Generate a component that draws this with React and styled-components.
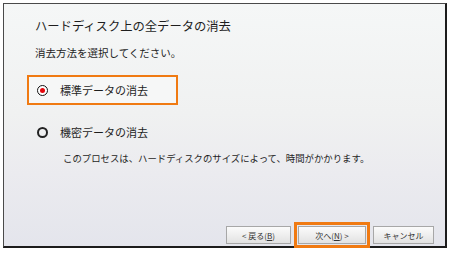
import React from "react";
import styled, { createGlobalStyle } from "styled-components";

const Global = createGlobalStyle`
	html, body {
		margin: 0;
		padding: 0;
		background: #ffffff;
	}
	body {
		font-family: "Noto Sans CJK JP", "Noto Sans", sans-serif;
		color: #1e1e1e;
	}
`;

const Page = styled.div`
	width: 450px;
	height: 255px;
	padding: 3px 0 0 3px;
	box-sizing: border-box;
`;

const Frame = styled.div`
	width: 444px;
	height: 245px;
	box-sizing: border-box;
	border-top: 1px solid #4a4a4a;
	border-left: 1px solid #4a4a4a;
	border-right: 2px solid #1c1c1c;
	border-bottom: 2px solid #1c1c1c;
	background: linear-gradient(#f5f7f7 0%, #f0f1f1 45%, #ebebef 70%, #e4e5ec 100%);
	padding: 14px 11px 2px 23px;
	display: flex;
	flex-direction: column;
`;

const Title = styled.h1`
	margin: 0 0 0 8px;
	font-size: 12.3px;
	line-height: 16px;
	font-weight: 400;
`;

const Subtitle = styled.p`
	margin: 11.5px 0 0 8px;
	font-size: 10.5px;
	line-height: 14px;
`;

const Options = styled.div`
	margin-top: 15.5px;
	display: flex;
	flex-direction: column;
	gap: 12px;
`;

const Option = styled.label`
	width: 151px;
	height: 30px;
	box-sizing: border-box;
	border: 2px solid ${(p) => (p.highlight ? "#f07a12" : "transparent")};
	background: ${(p) => (p.highlight ? "#f6f7f7" : "transparent")};
	padding-left: 8px;
	display: flex;
	align-items: center;
	gap: 12px;
	font-size: 11px;
`;

const Radio = styled.span`
	width: 11px;
	height: 11px;
	box-sizing: border-box;
	border-radius: 50%;
	border: ${(p) => (p.checked ? "1.5px solid #111" : "2px solid #222")};
	background: ${(p) => (p.checked ? "#ffffff" : "transparent")};
	display: flex;
	align-items: center;
	justify-content: center;
	flex-shrink: 0;

	&::after {
		content: "";
		width: 5px;
		height: 5px;
		border-radius: 50%;
		background: ${(p) => (p.checked ? "#e5070c" : "transparent")};
	}
`;

const Description = styled.p`
	margin: 4.5px 0 0 36px;
	font-size: 9.4px;
	line-height: 13px;
	white-space: nowrap;
`;

const Spacer = styled.div`
	flex: 1;
`;

const ButtonRow = styled.div`
	display: flex;
	justify-content: flex-end;
	gap: 7px;
`;

const Button = styled.button`
	width: ${(p) => p.w}px;
	height: 18px;
	padding: 0;
	box-sizing: border-box;
	border: 1px solid #a7a7a7;
	border-radius: 0;
	background: linear-gradient(#fbfbfb, #ececec 60%, #e2e2e2);
	font-family: "Noto Sans CJK JP", "Noto Sans", sans-serif;
	font-size: 8px;
	color: #333;
	outline: ${(p) => (p.highlight ? "3px solid #f07a12" : "none")};
	outline-offset: 1px;

	u {
		text-decoration: underline;
	}
`;

export default function App() {
	return (
		<Page>
			<Global />
			<Frame>
				<Title>ハードディスク上の全データの消去</Title>
				<Subtitle>消去方法を選択してください。</Subtitle>
				<Options>
					<Option highlight>
						<Radio checked />
						標準データの消去
					</Option>
					<Option>
						<Radio />
						機密データの消去
					</Option>
				</Options>
				<Description>このプロセスは、ハードディスクのサイズによって、時間がかかります。</Description>
				<Spacer />
				<ButtonRow>
					<Button w={65}>
						&lt; 戻る(<u>B</u>)
					</Button>
					<Button w={68} highlight>
						次へ(<u>N</u>) &gt;
					</Button>
					<Button w={61}>キャンセル</Button>
				</ButtonRow>
			</Frame>
		</Page>
	);
}
